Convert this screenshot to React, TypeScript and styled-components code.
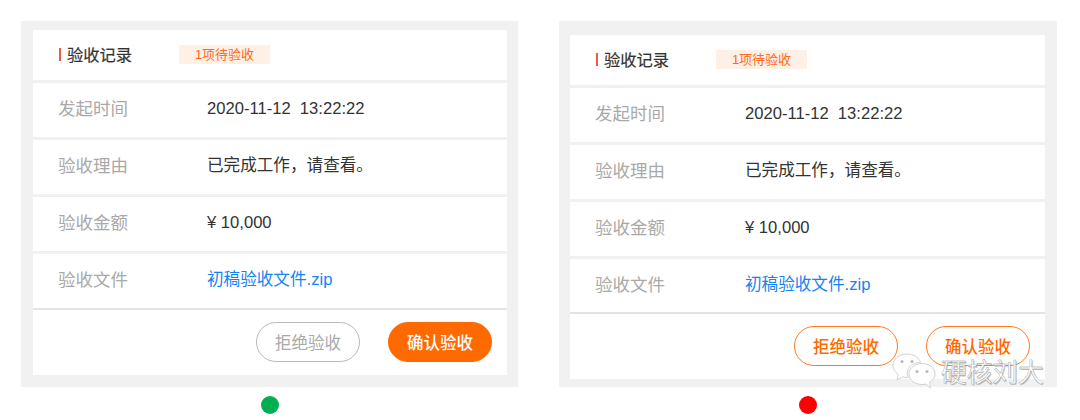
import styled, { createGlobalStyle } from "styled-components";

const GlobalStyle = createGlobalStyle`
  html, body {
    margin: 0;
    padding: 0;
    background: #fff;
  }
  body {
    width: 1080px;
    height: 420px;
    overflow: hidden;
    font-family: "Liberation Sans", "Noto Sans CJK SC", sans-serif;
  }
`;

const Page = styled.div`
  position: relative;
  display: flex;
  gap: 41px;
  width: 1080px;
  height: 420px;
  padding: 21px 0 0 21px;
  box-sizing: border-box;
`;

const Column = styled.div`
  display: flex;
  flex-direction: column;
  align-items: center;
`;

const Panel = styled.div<{ $top: number; $width: number; $left: number; $right: number }>`
  width: ${(p) => p.$width}px;
  height: 366px;
  box-sizing: border-box;
  background: #f1f1f1;
  padding: ${(p) => p.$top}px ${(p) => p.$right}px 0 ${(p) => p.$left}px;
`;

const Card = styled.div<{ $height: number }>`
  height: ${(p) => p.$height}px;
  background: #fff;
  display: flex;
  flex-direction: column;
`;

const Header = styled.div`
  display: flex;
  align-items: center;
  padding: 0 0 1px 26px;
  height: 49px;
  border-bottom: 3px solid #f1f1f1;
  flex-shrink: 0;
  line-height: 20px;
`;

const Mark = styled.span`
  width: 2px;
  height: 13px;
  background: #f0584c;
  margin-right: 6px;
`;

const Title = styled.span`
  width: 112px;
  font-size: 16.3px;
  white-space: nowrap;
  color: #333;
  -webkit-text-stroke: 0.2px #333;
`;

const Badge = styled.span`
  width: 91px;
  height: 19px;
  line-height: 19px;
  text-align: center;
  font-size: 13px;
  color: #ff6a22;
  background: #fff0e6;
`;

const Row = styled.div`
  height: 52px;
  padding: 0 0 2px 25px;
  display: flex;
  align-items: center;
  border-bottom: 3px solid #f1f1f1;
  flex-shrink: 0;
  line-height: 20px;
`;

const Label = styled.span<{ $width: number }>`
  width: ${(p) => p.$width}px;
  font-size: 17.5px;
  color: #a9a9a9;
`;

const Value = styled.span<{ $link?: boolean }>`
  font-size: 16.6px;
  color: ${(p) => (p.$link ? "#1484f0" : "#333")};
`;

const Footer = styled.div<{ $overlap: number }>`
  flex: 1;
  display: flex;
  align-items: flex-start;
  justify-content: flex-end;
  gap: 28px;
  padding: 12px 15px 0 0;
  border-top: 2px solid #e3e3e3;
  margin-top: -${(p) => p.$overlap}px;
  background: #fff;
`;

type ButtonKind = "muted" | "solid" | "outline";

const buttonColors: Record<ButtonKind, { bg: string; border: string; text: string }> = {
  muted: { bg: "#fff", border: "#b9b9b9", text: "#a9a9a9" },
  solid: { bg: "#ff6a00", border: "#ff6a00", text: "#fff" },
  outline: { bg: "#fff", border: "#ff7a1f", text: "#ff6a00" },
};

const Button = styled.button<{ $kind: ButtonKind }>`
  width: 104px;
  height: 40px;
  padding: 0;
  border-radius: 20px;
  border: 1.5px solid ${(p) => buttonColors[p.$kind].border};
  background: ${(p) => buttonColors[p.$kind].bg};
  color: ${(p) => buttonColors[p.$kind].text};
  font-family: inherit;
  font-size: 16.5px;
  font-weight: ${(p) => (p.$kind === "muted" ? 400 : 500)};
`;

const Dot = styled.span<{ $color: string }>`
  width: 18px;
  height: 18px;
  border-radius: 50%;
  margin-top: 9px;
  background: ${(p) => p.$color};
`;

const Watermark = styled.div`
  position: absolute;
  left: 892px;
  top: 353px;
  display: flex;
  align-items: center;
  gap: 5px;
`;

const WatermarkText = styled.span`
  font-size: 25.7px;
  line-height: 30px;
  color: #fff;
  -webkit-text-stroke: 0.4px #8f8f8f;
  text-shadow: 1px 1px 0 rgba(150, 150, 150, 0.5);
  margin-top: 3px;
`;

function WechatIcon() {
  return (
    <svg width="44" height="36" viewBox="0 0 44 36" fill="#fff" stroke="#d2d2d2" strokeWidth="1">
      <path d="M15 1C7 1 1 6 1 12.500c0 3.800 2 6.800 5.200 9L5 27l5.600-3.200c1.600.5 3.200.7 4.400.7h1.200C15.500 22.500 15.400 21 15.400 20c0-6 5.600-10.500 12.100-10.500h1C27 4.700 21.500 1 15 1z" />
      <path d="M43 21c0-5.800-5.800-10.500-13-10.500S17 15.200 17 21s5.800 10.500 13 10.500c1.400 0 2.700-.2 3.900-.5L38.500 35 37.500 29.300c3.300-2 5.500-4.900 5.500-8.300z" />
      <circle cx="10" cy="8.500" r="1.600" fill="#bbb" stroke="none" />
      <circle cx="20" cy="8.500" r="1.600" fill="#bbb" stroke="none" />
      <circle cx="25" cy="18.500" r="1.600" fill="#bbb" stroke="none" />
      <circle cx="35" cy="18.500" r="1.600" fill="#bbb" stroke="none" />
    </svg>
  );
}

const rows = [
  { label: "发起时间", value: "2020-11-12\u00a0\u00a013:22:22" },
  { label: "验收理由", value: "已完成工作，请查看。" },
  { label: "验收金额", value: "¥ 10,000" },
  { label: "验收文件", value: "初稿验收文件.zip", link: true },
];

type RecordCardProps = {
  top: number;
  height: number;
  width: number;
  left: number;
  right: number;
  labelWidth: number;
  overlap: number;
  reject: ButtonKind;
  confirm: ButtonKind;
  dot: string;
};

function RecordCard({
  top,
  height,
  width,
  left,
  right,
  labelWidth,
  overlap,
  reject,
  confirm,
  dot,
}: RecordCardProps) {
  return (
    <Column>
      <Panel $top={top} $width={width} $left={left} $right={right}>
        <Card $height={height}>
          <Header>
            <Mark />
            <Title>验收记录</Title>
            <Badge>1项待验收</Badge>
          </Header>
          {rows.map((row) => (
            <Row key={row.label}>
              <Label $width={labelWidth}>{row.label}</Label>
              <Value $link={row.link}>{row.value}</Value>
            </Row>
          ))}
          <Footer $overlap={overlap}>
            <Button $kind={reject}>拒绝验收</Button>
            <Button $kind={confirm}>确认验收</Button>
          </Footer>
        </Card>
      </Panel>
      <Dot $color={dot} />
    </Column>
  );
}

export default function App() {
  return (
    <>
      <GlobalStyle />
      <Page>
        <RecordCard
          top={9}
          height={345}
          width={497}
          left={12}
          right={11}
          labelWidth={149}
          overlap={3}
          reject="muted"
          confirm="solid"
          dot="#00b050"
        />
        <RecordCard
          top={14}
          height={344}
          width={498}
          left={11}
          right={12}
          labelWidth={150}
          overlap={4}
          reject="outline"
          confirm="outline"
          dot="#ff0000"
        />
        <Watermark>
          <WechatIcon />
          <WatermarkText>硬核刘大</WatermarkText>
        </Watermark>
      </Page>
    </>
  );
}
